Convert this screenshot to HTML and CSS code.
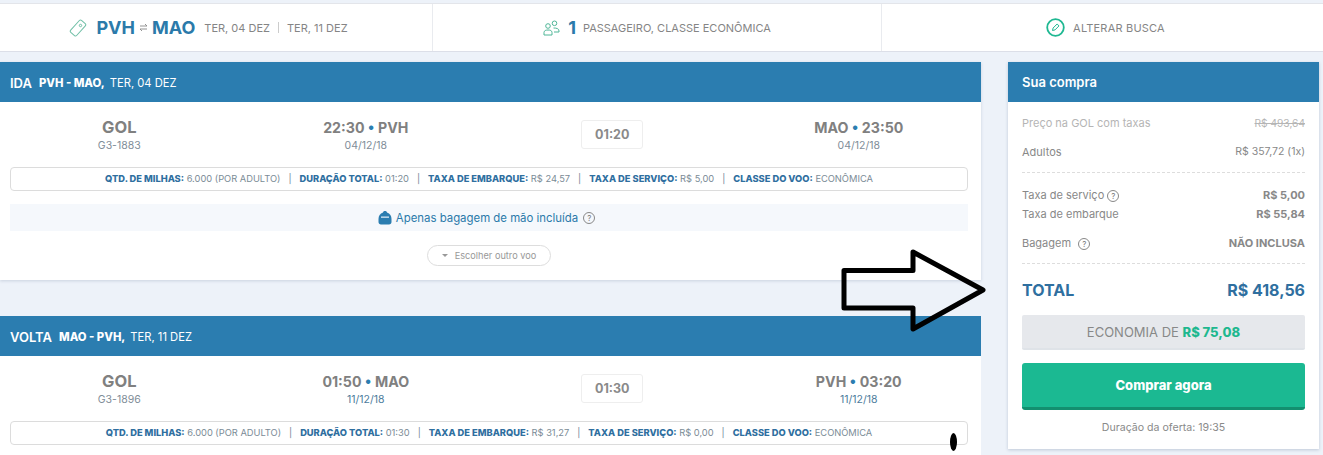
FILE: index.html

```html
<!DOCTYPE html>
<html lang="pt-BR">
<head>
    <meta charset="UTF-8">
    <meta name="viewport" content="width=device-width, initial-scale=1.0">
    <title>Sua compra</title>
    <link rel="stylesheet" href="styles.css">
</head>
<body>
    <div class="search-bar">
        <div class="search-cell search-route">
            <svg class="icon-tag" width="18" height="18" viewBox="0 0 18 18"><rect x="5" y="1" width="8" height="16" rx="1.500" transform="rotate(42 9 9)"/><circle cx="11.500" cy="6.500" r="1.200"/></svg>
            <span class="route">PVH</span>
            <svg class="icon-swap" width="9" height="9" viewBox="0 0 9 9"><path d="M1 3h7L6 1M8 6H1l2 2"/></svg>
            <span class="route">MAO</span>
            <span class="search-note route-dates">TER, 04 DEZ</span>
            <span class="dates-sep"></span>
            <span class="search-note">TER, 11 DEZ</span>
        </div>
        <div class="search-cell">
            <svg class="icon-people" width="17" height="16" viewBox="0 0 17 16"><circle cx="5" cy="6" r="2.300"/><circle cx="11.500" cy="3.300" r="2.300"/><path d="M1 15v-2.500C1 10.500 3 10 5 10s4 .5 4 2.500V15zM10.500 8c3 0 5.500.5 5.500 3v1h-5"/></svg>
            <span class="pax-count">1</span>
            <span class="search-note">PASSAGEIRO, CLASSE ECONÔMICA</span>
        </div>
        <div class="search-cell search-edit">
            <svg class="icon-edit" width="19" height="19" viewBox="0 0 19 19"><circle cx="9.500" cy="9.500" r="8.300"/><path d="M6.500 12.500l.6-2.500 4-4 1.900 1.900-4 4z"/></svg>
            <span class="search-note search-change">ALTERAR BUSCA</span>
        </div>
    </div>

    <div class="page">
        <div class="flights">
            <section class="flight">
                <h2 class="panel-head"><span class="head-kind">IDA</span> <b>PVH - MAO,</b> <span>TER, 04 DEZ</span></h2>
                <div class="flight-row">
                    <div class="flight-col"><strong class="carrier">GOL</strong><span>G3-1883</span></div>
                    <div class="flight-col"><strong>22:30 <i>•</i> PVH</strong><span>04/12/18</span></div>
                    <div class="flight-col"><div class="duration">01:20</div></div>
                    <div class="flight-col"><strong>MAO <i>•</i> 23:50</strong><span>04/12/18</span></div>
                </div>
                <div class="flight-info">
                    <span><b>QTD. DE MILHAS:</b> 6.000 (POR ADULTO)</span><em>|</em>
                    <span><b>DURAÇÃO TOTAL:</b> 01:20</span><em>|</em>
                    <span><b>TAXA DE EMBARQUE:</b> R$ 24,57</span><em>|</em>
                    <span><b>TAXA DE SERVIÇO:</b> R$ 5,00</span><em>|</em>
                    <span><b>CLASSE DO VOO:</b> ECONÔMICA</span>
                </div>
                <div class="baggage">
                    <svg class="icon-bag" width="14" height="15" viewBox="0 0 14 15"><path d="M5 2.500C5 .5 9 .5 9 2.500c3 1 4.500 3.500 4.500 6.500v3c0 1.500-1 2.500-2.500 2.500H3C1.500 14.500.5 13.500.5 12V9C.5 6 2 3.500 5 2.500z"/><rect x="3" y="6.500" width="8" height="1.300" fill="#dbe9f3"/></svg>
                    Apenas bagagem de mão incluída
                    <span class="help help-blue">?</span>
                </div>
                <div class="other-wrap"><div class="other-flight"><span class="caret"></span>Escolher outro voo</div></div>
            </section>

            <section class="flight flight-return">
                <h2 class="panel-head"><span class="head-kind">VOLTA</span> <b>MAO - PVH,</b> <span>TER, 11 DEZ</span></h2>
                <div class="flight-row">
                    <div class="flight-col"><strong class="carrier">GOL</strong><span>G3-1896</span></div>
                    <div class="flight-col"><strong>01:50 <i>•</i> MAO</strong><span class="date-blue">11/12/18</span></div>
                    <div class="flight-col"><div class="duration">01:30</div></div>
                    <div class="flight-col"><strong>PVH <i>•</i> 03:20</strong><span class="date-blue">11/12/18</span></div>
                </div>
                <div class="flight-info">
                    <span><b>QTD. DE MILHAS:</b> 6.000 (POR ADULTO)</span><em>|</em>
                    <span><b>DURAÇÃO TOTAL:</b> 01:30</span><em>|</em>
                    <span><b>TAXA DE EMBARQUE:</b> R$ 31,27</span><em>|</em>
                    <span><b>TAXA DE SERVIÇO:</b> R$ 0,00</span><em>|</em>
                    <span><b>CLASSE DO VOO:</b> ECONÔMICA</span>
                </div>
            </section>
        </div>

        <aside class="summary">
            <h2 class="panel-head summary-head">Sua compra</h2>
            <div class="summary-body">
                <div class="line line-old"><span>Preço na GOL com taxas</span><s>R$ 493,64</s></div>
                <div class="line line-adults"><span>Adultos</span><span class="adults-price">R$ 357,72 (1x)</span></div>
                <div class="dash dash-first"></div>
                <div class="line line-service"><span>Taxa de serviço <span class="help">?</span></span><b>R$ 5,00</b></div>
                <div class="line line-board"><span>Taxa de embarque</span><b>R$ 55,84</b></div>
                <div class="line line-bag"><span>Bagagem <span class="help help-gap">?</span></span><b>NÃO INCLUSA</b></div>
                <div class="dash dash-second"></div>
                <div class="total"><span>TOTAL</span><span>R$ 418,56</span></div>
                <div class="savings">ECONOMIA DE <b>R$ 75,08</b></div>
                <button class="buy">Comprar agora</button>
                <div class="offer">Duração da oferta: 19:35</div>
            </div>
        </aside>
    </div>

    <!-- marcas feitas a mao por cima do print -->
    <svg class="arrow-mark" width="160" height="90" viewBox="0 0 160 90"><path d="M17 23.500h69V5l70 38-70 39V61H17z"/></svg>
    <div class="ink-dot"></div>
</body>
</html>
```

FILE: styles.css

```css
html, body {
    height: 455px;
    overflow: hidden;
}
body {
    margin: 0;
    padding-top: 3px;
    box-sizing: border-box;
    position: relative;
    background-color: #edf2f9;
    font-family: Inter, "Liberation Sans", sans-serif;
    color: #8a8a8a;
}
.search-bar {
    display: grid;
    grid-template-columns: 432px 449px 1fr;
    height: 49px;
    background-color: #fff;
    border-top: 1px solid #e3e5ea;
    border-bottom: 1px solid #dcdfe8;
    box-sizing: border-box;
}
.search-cell {
    display: flex;
    align-items: center;
    justify-content: center;
    border-left: 1px solid #e9ebef;
}
.search-route {
    border-left: none;
    padding-right: 15px;
}
.search-edit {
    padding-left: 6px;
}
.route {
    font-size: 18px;
    font-weight: 700;
    color: #2b7aaa;
}
.search-note {
    font-size: 11px;
    color: #858585;
}
.search-change {
    letter-spacing: 0.2px;
}
.route-dates {
    margin-left: 9px;
}
.dates-sep {
    width: 1px;
    height: 11px;
    margin: 0 8px;
    background-color: #ccc;
}
.icon-tag {
    margin-right: 9px;
    fill: none;
    stroke: #6fbfa6;
    stroke-width: 1;
}
.icon-swap {
    margin: 0 4px;
    fill: none;
    stroke: #888;
    stroke-width: 0.9;
}
.icon-people {
    margin-right: 8px;
    fill: none;
    stroke: #4fb697;
    stroke-width: 1;
}
.pax-count {
    margin-right: 7px;
    font-size: 18px;
    font-weight: 700;
    color: #2b7aaa;
}
.icon-edit {
    margin-right: 8px;
    fill: none;
    stroke: #1fb892;
    stroke-width: 1.800;
}
.icon-edit path {
    stroke-width: 1;
}
.page {
    display: grid;
    grid-template-columns: 981px 311px;
    column-gap: 27px;
    margin-top: 10px;
}
.panel-head {
    height: 40px;
    margin: 0;
    padding: 1px 0 0 10px;
    box-sizing: border-box;
    display: flex;
    align-items: center;
    gap: 5px;
    background-color: #2b7db0;
    color: #fff;
    font-size: 11.200px;
    font-weight: 400;
}
.panel-head b {
    font-size: 11.300px;
    font-weight: 800;
}
.head-kind {
    font-size: 13px;
    font-weight: 600;
    margin-right: 2px;
}
.flight {
    height: 218px;
    margin-bottom: 36px;
    background-color: #fff;
    box-shadow: 0 1px 3px rgba(60, 80, 120, 0.2);
    overflow: hidden;
}
.flight-return {
    height: 139px;
    margin-bottom: 0;
    box-shadow: none;
}
.flight-row {
    display: grid;
    grid-template-columns: repeat(4, 246.500px);
    margin-left: -4px;
    height: 65px;
    text-align: center;
}
.flight-col {
    display: flex;
    flex-direction: column;
    align-items: center;
    padding-top: 16px;
}
.flight-col strong {
    font-size: 14.200px;
    line-height: 19px;
    font-weight: 700;
    color: #808080;
}
.flight-col .carrier {
    font-size: 16.500px;
}
.flight-col i {
    font-style: normal;
    color: #2b7db0;
}
.flight-col span {
    font-size: 10.500px;
    line-height: 17px;
    color: #7f8d98;
}
.flight-col .date-blue {
    color: #4d7c9c;
}
.duration {
    width: 60px;
    height: 27px;
    margin-top: 2px;
    border: 1px solid #eee;
    border-radius: 3px;
    font-size: 12.500px;
    font-weight: 700;
    line-height: 27px;
    color: #8a8a8a;
}
.flight-info {
    height: 24px;
    margin: 0 13px 0 10px;
    padding-bottom: 1px;
    display: flex;
    align-items: center;
    justify-content: center;
    gap: 8px;
    border: 1px solid #dcdcdc;
    border-radius: 4px;
    box-sizing: border-box;
    font-size: 9.300px;
    color: #7b8b96;
}
.flight-info b {
    font-weight: 800;
    color: #2f6f9f;
}
.flight-info em {
    font-style: normal;
    color: #6f8494;
}
.baggage {
    height: 27px;
    margin: 13px 13px 0 10px;
    padding-right: 5px;
    display: flex;
    align-items: center;
    justify-content: center;
    gap: 4px;
    background-color: #f5f8fc;
    font-size: 11.400px;
    color: #2b7aaa;
}
.icon-bag {
    fill: #2b7db0;
}
.help {
    display: inline-block;
    width: 10px;
    height: 10px;
    border: 1px solid #888;
    border-radius: 50%;
    font-size: 8px;
    line-height: 10px;
    text-align: center;
    color: #777;
}
.help-blue {
    margin-left: 1px;
}
.help-gap {
    margin-left: 4px;
}
.other-wrap {
    display: flex;
    justify-content: center;
    margin-top: 14px;
    padding-right: 3px;
}
.other-flight {
    width: 124px;
    height: 21px;
    display: flex;
    align-items: center;
    justify-content: center;
    gap: 7px;
    border: 1px solid #ddd;
    border-radius: 11px;
    box-sizing: border-box;
    font-size: 9.200px;
    color: #999;
}
.caret {
    border: 3px solid transparent;
    border-top-color: #999;
    border-bottom: none;
}
.summary {
    height: 387px;
    background-color: #fff;
    box-shadow: 0 1px 3px rgba(60, 80, 120, 0.25);
}
.summary-head {
    padding: 0 0 0 14px;
    font-size: 13px;
    font-weight: 600;
}
.summary-body {
    padding: 0 14px;
    font-size: 11px;
}
.line {
    display: flex;
    justify-content: space-between;
    line-height: 16px;
    color: #888;
}
.line b {
    font-weight: 700;
    color: #888;
}
.line-old {
    margin-top: 13px;
    color: #b5b5b5;
}
.line-old s {
    font-size: 10.200px;
}
.adults-price {
    font-size: 10.500px;
}
.line-adults {
    margin-top: 13px;
}
.dash {
    border-top: 1px dashed #ddd;
}
.dash-first {
    margin-top: 12px;
}
.line-service {
    margin-top: 14px;
}
.line-board {
    margin-top: 3px;
}
.line-bag {
    margin-top: 13px;
}
.dash-second {
    margin-top: 12px;
}
.total {
    display: flex;
    justify-content: space-between;
    margin-top: 16px;
    line-height: 21px;
    font-size: 16px;
    font-weight: 700;
    color: #2f6f9f;
}
.savings {
    height: 35px;
    margin-top: 14px;
    background-color: #e6e8ec;
    border-radius: 2px;
    border-bottom: 2px solid #dfe3e8;
    box-sizing: border-box;
    text-align: center;
    line-height: 34px;
    font-size: 13px;
    color: #888;
}
.savings b {
    font-weight: 800;
    color: #1eb88f;
}
.buy {
    display: block;
    width: 100%;
    height: 47px;
    margin-top: 13px;
    border: none;
    border-bottom: 3px solid #138f6f;
    border-radius: 3px;
    background-color: #1bb992;
    font-family: inherit;
    font-size: 13px;
    font-weight: 800;
    color: #fff;
}
.offer {
    margin-top: 10px;
    text-align: center;
    font-size: 10.600px;
    line-height: 16px;
    color: #8a8a8a;
}
.arrow-mark {
    position: absolute;
    left: 827px;
    top: 247px;
    fill: none;
    stroke: #000;
    stroke-width: 5;
    stroke-linejoin: round;
}
.ink-dot {
    position: absolute;
    left: 950px;
    top: 433px;
    width: 7px;
    height: 18px;
    border-radius: 50%;
    background-color: #000;
}
```
